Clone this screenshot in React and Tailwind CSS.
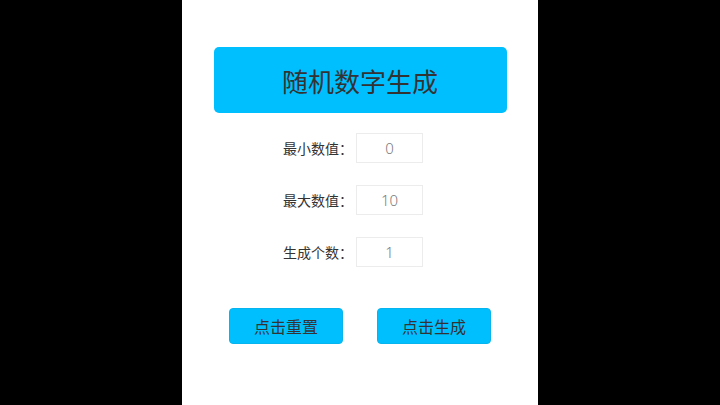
import React from "react";

const font = { fontFamily: '"Noto Sans CJK SC", "Noto Sans", sans-serif' };

function Row({ label, value }) {
  return (
    <div className="flex items-center justify-center pr-[14px]">
      <span className="text-[14px] leading-none text-[#333333] w-[73px]">{label}</span>
      <div className="w-[67px] h-[30px] border border-[#ececec] flex items-center justify-center text-[15px] font-light text-[#7a7a7a] font-['Noto_Sans',sans-serif]">
        {value}
      </div>
    </div>
  );
}

export default function App() {
  return (
    <div className="w-[720px] h-[405px] bg-black flex justify-center" style={font}>
      <div className="w-[356px] h-full bg-white flex flex-col items-center">
        <div className="mt-[47px] w-[293px] h-[66px] rounded-[5px] bg-[#00bfff] flex items-center justify-center text-[26px] text-[#333333]">
          随机数字生成
        </div>
        <div className="mt-[20px] flex flex-col gap-[22px] w-full">
          <Row label="最小数值：" value="0" />
          <Row label="最大数值：" value="10" />
          <Row label="生成个数：" value="1" />
        </div>
        <div className="mt-[41px] flex gap-[34px]">
          <button className="w-[114px] h-[36px] rounded-[4px] bg-[#00bfff] border border-[#08b4ee] text-[16px] text-[#333333] flex items-center justify-center">
            点击重置
          </button>
          <button className="w-[114px] h-[36px] rounded-[4px] bg-[#00bfff] border border-[#08b4ee] text-[16px] text-[#333333] flex items-center justify-center">
            点击生成
          </button>
        </div>
      </div>
    </div>
  );
}
